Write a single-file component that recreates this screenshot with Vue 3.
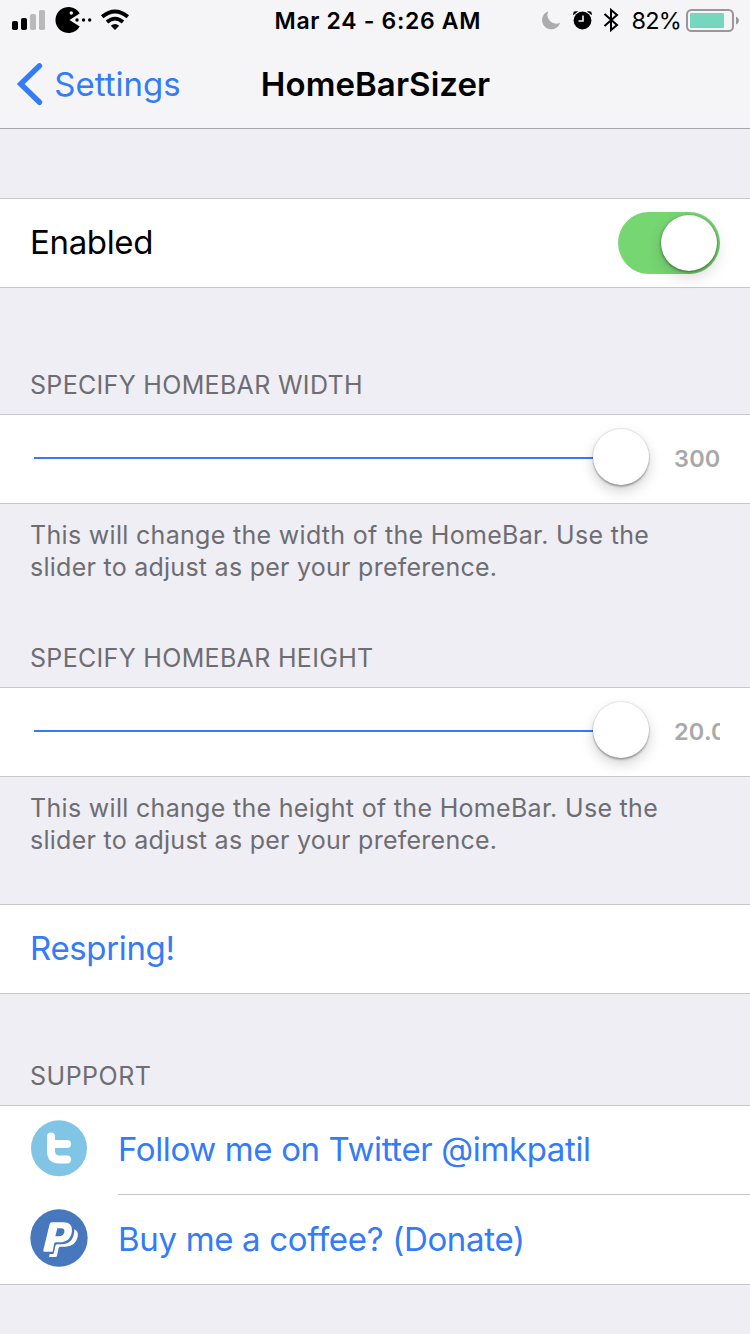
<script setup>
import { ref } from 'vue'

const sliders = ref([
  {
    title: 'SPECIFY HOMEBAR WIDTH',
    value: '300',
    cls: 'width',
    notes: ['This will change the width of the HomeBar. Use the', 'slider to adjust as per your preference.'],
  },
  {
    title: 'SPECIFY HOMEBAR HEIGHT',
    value: '20.0',
    cls: 'height',
    notes: ['This will change the height of the HomeBar. Use the', 'slider to adjust as per your preference.'],
  },
])
</script>

<template>
  <div class="screen">
    <header class="top">
      <div class="status">
        <svg class="left-icons" width="130" height="40" viewBox="0 0 130 40">
          <rect x="12" y="21" width="6" height="9" rx="1.8" />
          <rect x="21" y="18" width="6" height="12" rx="1.8" />
          <rect x="30" y="14" width="6" height="16" rx="1.8" fill="#b9b9bb" />
          <rect x="39" y="10" width="6" height="20" rx="1.8" fill="#b9b9bb" />
          <path d="M69.500 20 L79.700 13.500 A13 13 0 1 0 79.700 26.500 Z" />
          <circle cx="71.300" cy="13" r="1.700" fill="#f5f5f8" />
          <circle cx="77" cy="20" r="1.700" />
          <circle cx="83.500" cy="20" r="1.700" />
          <circle cx="89.700" cy="20" r="1.700" />
          <path d="M102.200 16.800 Q115 6.200 127.800 16.800" fill="none" stroke="#000" stroke-width="3.800" />
          <path d="M107 22 Q115 15.200 123 22" fill="none" stroke="#000" stroke-width="3.800" />
          <path d="M110.800 25.800 Q115 22.300 119.200 25.800 L115 30 Z" />
        </svg>
        <span class="clock">Mar 24 - 6:26 AM</span>
        <div class="right">
          <svg width="86" height="40" viewBox="536 0 86 40">
            <path d="M548.300 11.200 A9.300 9.300 0 1 0 560.200 22.800 Q554.500 25.200 550.200 21.300 Q545.800 17 548.300 11.200 Z" fill="#acacae" />
            <circle cx="582.500" cy="20.500" r="8.900" />
            <path d="M573.200 15.200 V13.500 Q573.200 11.200 575.500 11.200 H578.300 Z M591.800 15.200 V13.500 Q591.800 11.200 589.500 11.200 H586.700 Z" />
            <path d="M583 15.500 V21 H578.500" fill="none" stroke="#f5f5f8" stroke-width="1.600" />
            <path d="M604.500 14 L617 25 L611 30 V10 L617 15 L604.500 26" fill="none" stroke="#000" stroke-width="2" />
          </svg>
          <span class="percent">82%</span>
          <svg class="battery" width="56" height="40" viewBox="684 0 56 40">
            <rect x="687" y="10" width="46" height="21" rx="4.500" fill="none" stroke="#98989a" stroke-width="2" />
            <rect x="690" y="13" width="34" height="15" rx="1" fill="#76d7bf" />
            <path d="M736 16.500 Q739 18 739 20.500 Q739 23 736 24.500 Z" fill="#98989a" />
          </svg>
        </div>
      </div>
      <nav class="nav">
        <svg class="back" width="46" height="46" viewBox="0 0 46 46">
          <path d="M39.500 4.800 L20.700 23 L39.500 41.300" fill="none" stroke="#347bf7" stroke-width="5.400" stroke-linecap="round" />
        </svg>
        <span class="settings">Settings</span>
        <span class="title">HomeBarSizer</span>
      </nav>
    </header>

    <section class="row enabled-row">
      <span class="enabled">Enabled</span>
      <span class="switch"><span class="knob"></span></span>
    </section>

    <template v-for="s in sliders" :key="s.title">
      <h2 class="heading" :class="s.cls">{{ s.title }}</h2>
      <section class="row slider-row">
        <span class="track"></span>
        <span class="knob thumb"></span>
        <span class="value" :class="s.cls">{{ s.value }}</span>
      </section>
      <div class="note" :class="s.cls">
        <p v-for="(n, i) in s.notes" :key="i" :class="'line' + i">{{ n }}</p>
      </div>
    </template>

    <section class="row respring-row"><span class="respring">Respring!</span></section>

    <h2 class="heading support">SUPPORT</h2>
    <section class="links">
      <div class="link">
        <svg class="badge" width="58" height="58" viewBox="0 0 58 58">
          <circle cx="29" cy="28.300" r="28" fill="#81c5e6" />
          <path d="M21 16.500 V31 Q21 39.500 29.500 39.500 H37 M21 23.900 H37" fill="none" stroke="#fff" stroke-width="8" stroke-linecap="round" />
        </svg>
        <span class="link-text twitter">Follow me on Twitter @imkpatil</span>
      </div>
      <div class="link">
        <svg class="badge" width="58" height="58" viewBox="90 477 174 174">
          <circle cx="177" cy="564" r="86" fill="#4777bd" />
          <path d="M155 517 H190 Q218 517 216 543 Q212 577 178 577 H167 Q163 577 162 582 L158 605 H133 Q129 605 130 601 L149 522 Q150 517 155 517 Z M172 535 L166 559 H176 Q190 559 193 547 Q195 535 184 535 Z" fill="#fff" fill-rule="evenodd" />
          <path d="M223 538 Q237 545 233 561 Q226 590 195 590 H182 Q177 590 176 594 L171 617 Q170 621 166 621 H147 L149 612 H158 Q161 612 162 608 L166 588 Q167 583 172 583 H188 Q222 581 223 538 Z" fill="#fff" />
        </svg>
        <span class="link-text donate">Buy me a coffee? (Donate)</span>
      </div>
    </section>
  </div>
</template>

<style>
body { margin: 0; background: #efeef4; }
</style>

<style scoped>
* { box-sizing: border-box; }
.screen {
  width: 750px;
  height: 1334px;
  overflow: hidden;
  background: #efeef4;
  font-family: Inter, "Liberation Sans", sans-serif;
  color: #000;
  white-space: nowrap;
}
.top { height: 129px; background: #f5f5f8; border-bottom: 1px solid #a7a7ab; }
.status { height: 40px; display: flex; align-items: center; }
svg { display: block; flex: none; }
.clock { margin-left: 144.500px; width: 261.500px; font-size: 23px; font-weight: 600; letter-spacing: 0.68px; line-height: 40px; padding-top: 2px; }
.right { display: flex; align-items: center; }
.percent { width: 52px; margin-left: 9.500px; font-size: 23.500px; line-height: 40px; letter-spacing: -0.8px; padding-top: 2px; }
.battery { margin-left: 0.500px; }
.nav { height: 88px; display: flex; align-items: center; }
.settings { width: 206.500px; margin-left: 8.300px; font-size: 33px; color: #347bf7; letter-spacing: 0; }
.title { font-size: 33px; font-weight: 600; letter-spacing: 0.08px; }
.row {
  height: 90px;
  display: flex;
  align-items: center;
  background: #fff;
  border-top: 1px solid #c8c7cc;
  border-bottom: 1px solid #c8c7cc;
  padding: 0 30px;
}
.enabled-row { margin-top: 69px; justify-content: space-between; font-size: 33px; letter-spacing: -0.35px; }
.enabled, .respring { padding-bottom: 2px; }
.switch {
  width: 102px;
  height: 62px;
  border-radius: 31px;
  background: #76d672;
  display: flex;
  align-items: center;
  justify-content: flex-end;
  padding-right: 3px;
}
.knob {
  flex: none;
  width: 56px;
  height: 56px;
  border-radius: 50%;
  background: #fff;
  box-shadow: 0 1px 3px rgba(0, 0, 0, 0.5), 0 6px 16px rgba(0, 0, 0, 0.16);
}
.thumb {
  margin-bottom: 4px;
  box-shadow: 0 0 1px 1px rgba(0, 0, 0, 0.08), 0 2px 2px rgba(0, 0, 0, 0.25), 0 6px 14px rgba(0, 0, 0, 0.18);
}
.heading { margin: 0; font-weight: 400; font-size: 25px; line-height: 32px; color: #6d6d72; padding-left: 30px; }
.heading.width { padding-top: 81px; height: 126px; letter-spacing: 0.32px; }
.heading.height { padding-top: 54px; height: 99px; letter-spacing: 0.32px; }
.heading.support { padding-top: 66px; height: 111px; letter-spacing: 0.5px; }
.track { width: 559px; height: 2px; background: #347bf7; margin: 0 0 2px 4px; }
.value { width: 46px; margin-left: 25px; overflow: hidden; font-size: 23.500px; font-weight: 600; line-height: 32px; color: #a9a9a9; letter-spacing: 0.2px; }
.note { font-size: 25px; line-height: 32px; color: #6d6d72; padding: 15px 30px 0; letter-spacing: 0.31px; }
.note p { margin: 0; }
.note .line1 { letter-spacing: 0.26px; }
.note.width { height: 84px; }
.note.height { height: 127px; }
.respring-row { font-size: 33px; color: #347bf7; letter-spacing: -0.35px; }
.links { background: #fff; border-top: 1px solid #c8c7cc; border-bottom: 1px solid #c8c7cc; height: 180px; }
.link { height: 89px; display: flex; align-items: center; padding-left: 30px; color: #347bf7; font-size: 33px; }
.badge { margin-bottom: 3px; }
.link-text { flex: 1; margin-left: 30px; height: 89px; line-height: 89px; }
.twitter { border-bottom: 1px solid #c8c7cc; letter-spacing: -0.37px; line-height: 87px; }
.donate { letter-spacing: -0.32px; }
</style>
